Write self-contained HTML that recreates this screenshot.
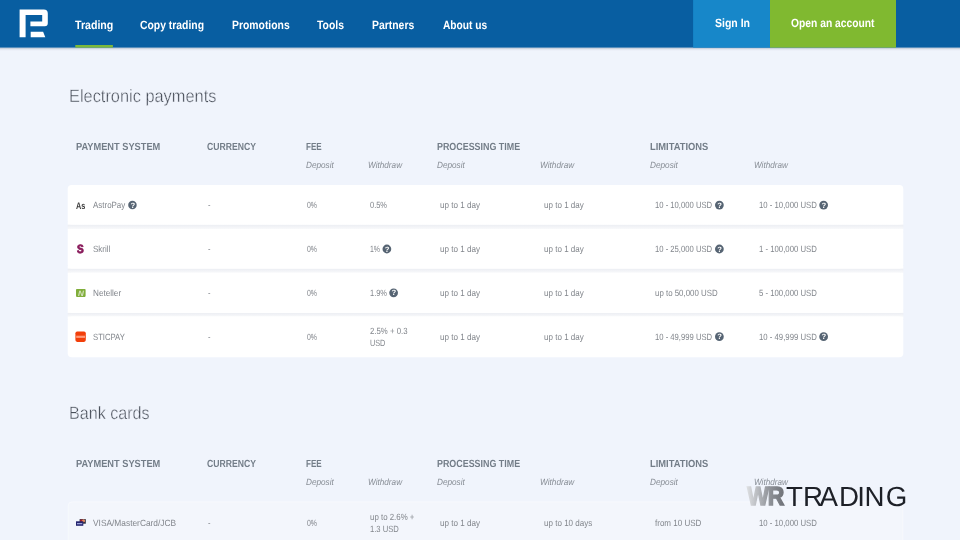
<!DOCTYPE html>
<html lang="en">
<head>
<meta charset="utf-8">
<title>Deposit and withdrawal</title>
<style>
*{margin:0;padding:0;box-sizing:border-box}
html,body{width:960px;height:540px;overflow:hidden}
body{position:relative;background:#f0f4fc;font-family:"Liberation Sans",sans-serif;text-rendering:geometricPrecision}
#pg{position:absolute;left:0;top:0;width:960px;height:540px;will-change:transform}
.t{position:absolute;white-space:nowrap;line-height:1;transform-origin:0 50%;display:block}
.nv{color:#fff;font-weight:bold}
.ttl{color:#474d58;-webkit-text-stroke:0.4px #f0f4fc}
.hd{color:#737d88;font-weight:bold}
.sub{color:#878d95;font-style:italic}
.d{color:#82868c}
.as{color:#3c3c3c;font-weight:bold}
.sk{color:#8a1c5c;font-weight:bold;-webkit-text-stroke:0.8px #8a1c5c}
.nt{color:#d6e2c0;font-weight:bold;font-style:italic}
.hq{color:#fff;font-weight:bold}
.ic{position:absolute;display:block}
</style>
</head>
<body>
<div id="pg">
<svg class="ic" style="left:0;top:0;width:960px;height:540px" viewBox="0 0 960 540">
<defs>
<linearGradient id="gg" x1="0" y1="0" x2="0" y2="1"><stop offset="0" stop-color="#fff"/><stop offset="0.26" stop-color="#fff"/><stop offset="0.3" stop-color="#eceef3"/><stop offset="0.7" stop-color="#f7f8fa"/><stop offset="0.74" stop-color="#fff"/><stop offset="1" stop-color="#fff"/></linearGradient>
<linearGradient id="ns" x1="0" y1="0" x2="0" y2="1"><stop offset="0" stop-color="#8f98aa" stop-opacity=".7"/><stop offset="0.45" stop-color="#aab2c2" stop-opacity=".25"/><stop offset="1" stop-color="#c0c8d8" stop-opacity="0"/></linearGradient>
</defs>
<rect x="0" y="47.6" width="960" height="3.4" fill="url(#ns)"/>
<rect x="0" y="0" width="960" height="47.6" fill="#085ea1"/>
<rect x="693.1" y="0" width="77" height="47.6" fill="#1787c9"/>
<rect x="770" y="0" width="126" height="47.6" fill="#80b930"/>
<rect x="75.3" y="45" width="37.6" height="2.6" fill="#7cb83a"/>
<path fill="#fff" d="M19.6 9.6 H43.8 A4 4 0 0 1 47.8 13.6 V23.2 A3 3 0 0 1 44.8 26.2 H30.4 V21.4 H42.2 V15.1 H25.6 V37.3 H19.6 Z"/>
<path fill="#fff" d="M30.7 31.8 H43.1 L45.3 37.3 H30.7 Z"/>
<rect x="67.7" y="221.90" width="835.6" height="9.55" fill="url(#gg)"/>
<rect x="67.7" y="265.95" width="835.6" height="9.30" fill="url(#gg)"/>
<rect x="67.7" y="310.15" width="835.6" height="8.90" fill="url(#gg)"/>
<rect x="67.7" y="185.1" width="835.6" height="39.3" rx="4" fill="#fff"/>
<rect x="67.7" y="228.95" width="835.6" height="39.5" rx="4" fill="#fff"/>
<rect x="67.7" y="272.75" width="835.6" height="39.9" rx="4" fill="#fff"/>
<rect x="67.7" y="316.55" width="835.6" height="40.6" rx="4" fill="#fff"/>
<rect x="68.2" y="501.9" width="834.6" height="46" rx="4" fill="#f3f6fc" stroke="#f7f9fd" stroke-width="1"/>
<rect x="76" y="289" width="9.6" height="7.9" rx="0.8" fill="#80ae3b"/>
<rect x="75.4" y="331.5" width="10.4" height="10.4" rx="1.8" fill="#f23f0a"/>
<rect x="76.2" y="335.7" width="8.8" height="2.2" fill="#ff9a7a"/>
<rect x="79.6" y="519.1" width="6.2" height="4.6" fill="#2c2c3c"/>
<circle cx="81.6" cy="520.7" r="1.5" fill="#b0202a"/>
<circle cx="83.6" cy="520.7" r="1.5" fill="#e08a60"/>
<rect x="76" y="521.3" width="7.3" height="4.5" fill="#24246e"/>
<rect x="77" y="523" width="5.3" height="1.3" fill="#9aa0d8"/>
<circle cx="132.45" cy="205.10" r="4.25" fill="#566473"/>
<circle cx="719.38" cy="205.10" r="4.38" fill="#566473"/>
<circle cx="823.62" cy="205.10" r="4.38" fill="#566473"/>
<circle cx="386.88" cy="249.00" r="4.38" fill="#566473"/>
<circle cx="719.38" cy="249.00" r="4.38" fill="#566473"/>
<circle cx="393.62" cy="292.80" r="4.38" fill="#566473"/>
<circle cx="719.38" cy="336.70" r="4.38" fill="#566473"/>
<circle cx="823.62" cy="336.70" r="4.38" fill="#566473"/>
</svg>

<span class="t nv" style="left:75.30px;top:18px;font-size:12.0px;line-height:14px;transform:scaleX(0.8836);">Trading</span>
<span class="t nv" style="left:140.30px;top:18px;font-size:12.0px;line-height:14px;transform:scaleX(0.8654);">Copy trading</span>
<span class="t nv" style="left:231.55px;top:18px;font-size:12.0px;line-height:14px;transform:scaleX(0.8657);">Promotions</span>
<span class="t nv" style="left:317.30px;top:18px;font-size:12.0px;line-height:14px;transform:scaleX(0.8669);">Tools</span>
<span class="t nv" style="left:372.30px;top:18px;font-size:12.0px;line-height:14px;transform:scaleX(0.8670);">Partners</span>
<span class="t nv" style="left:442.80px;top:18px;font-size:12.0px;line-height:14px;transform:scaleX(0.8506);">About us</span>
<span class="t nv" style="left:714.50px;top:16px;font-size:12.0px;line-height:14px;transform:scaleX(0.8748);">Sign In</span>
<span class="t nv" style="left:791.00px;top:16px;font-size:12.0px;line-height:14px;transform:scaleX(0.8577);">Open an account</span>
<span class="t ttl" style="left:68.99px;top:86px;font-size:17.9px;line-height:20px;transform:scaleX(0.9148);">Electronic payments</span>
<span class="t ttl" style="left:69.00px;top:403px;font-size:17.9px;line-height:20px;transform:scaleX(0.9000);">Bank cards</span>
<span class="t hd" style="left:75.50px;top:142px;font-size:10.3px;line-height:11px;transform:scaleX(0.8981);">PAYMENT SYSTEM</span>
<span class="t hd" style="left:206.75px;top:142px;font-size:10.3px;line-height:11px;transform:scaleX(0.8378);">CURRENCY</span>
<span class="t hd" style="left:305.50px;top:142px;font-size:10.3px;line-height:11px;transform:scaleX(0.7813);">FEE</span>
<span class="t hd" style="left:436.75px;top:142px;font-size:10.3px;line-height:11px;transform:scaleX(0.8650);">PROCESSING TIME</span>
<span class="t hd" style="left:650.00px;top:142px;font-size:10.3px;line-height:11px;transform:scaleX(0.9071);">LIMITATIONS</span>
<span class="t sub" style="left:305.50px;top:160px;font-size:9.0px;line-height:10px;transform:scaleX(0.9108);">Deposit</span>
<span class="t sub" style="left:368.00px;top:160px;font-size:9.0px;line-height:10px;transform:scaleX(0.9096);">Withdraw</span>
<span class="t sub" style="left:436.75px;top:160px;font-size:9.0px;line-height:10px;transform:scaleX(0.9108);">Deposit</span>
<span class="t sub" style="left:540.20px;top:160px;font-size:9.0px;line-height:10px;transform:scaleX(0.9149);">Withdraw</span>
<span class="t sub" style="left:650.00px;top:160px;font-size:9.0px;line-height:10px;transform:scaleX(0.9125);">Deposit</span>
<span class="t sub" style="left:753.75px;top:160px;font-size:9.0px;line-height:10px;transform:scaleX(0.9030);">Withdraw</span>
<span class="t hd" style="left:75.50px;top:459px;font-size:10.3px;line-height:11px;transform:scaleX(0.8981);">PAYMENT SYSTEM</span>
<span class="t hd" style="left:206.75px;top:459px;font-size:10.3px;line-height:11px;transform:scaleX(0.8378);">CURRENCY</span>
<span class="t hd" style="left:305.50px;top:459px;font-size:10.3px;line-height:11px;transform:scaleX(0.7813);">FEE</span>
<span class="t hd" style="left:436.75px;top:459px;font-size:10.3px;line-height:11px;transform:scaleX(0.8650);">PROCESSING TIME</span>
<span class="t hd" style="left:650.00px;top:459px;font-size:10.3px;line-height:11px;transform:scaleX(0.9071);">LIMITATIONS</span>
<span class="t sub" style="left:305.50px;top:477px;font-size:9.0px;line-height:10px;transform:scaleX(0.9108);">Deposit</span>
<span class="t sub" style="left:368.00px;top:477px;font-size:9.0px;line-height:10px;transform:scaleX(0.9096);">Withdraw</span>
<span class="t sub" style="left:436.75px;top:477px;font-size:9.0px;line-height:10px;transform:scaleX(0.9108);">Deposit</span>
<span class="t sub" style="left:540.20px;top:477px;font-size:9.0px;line-height:10px;transform:scaleX(0.9149);">Withdraw</span>
<span class="t sub" style="left:650.00px;top:477px;font-size:9.0px;line-height:10px;transform:scaleX(0.9125);">Deposit</span>
<span class="t sub" style="left:753.75px;top:477px;font-size:9.0px;line-height:10px;transform:scaleX(0.9030);">Withdraw</span>
<span class="t d" style="left:93.00px;top:200px;font-size:9.0px;line-height:10px;transform:scaleX(0.8834);">AstroPay</span>
<span class="t d" style="left:370.00px;top:200px;font-size:9.0px;line-height:10px;transform:scaleX(0.8288);">0.5%</span>
<span class="t d" style="left:655.00px;top:200px;font-size:9.0px;line-height:10px;transform:scaleX(0.8514);">10 - 10,000 USD</span>
<span class="t d" style="left:758.75px;top:200px;font-size:9.0px;line-height:10px;transform:scaleX(0.8625);">10 - 10,000 USD</span>
<span class="t d" style="left:93.00px;top:244px;font-size:9.0px;line-height:10px;transform:scaleX(0.8924);">Skrill</span>
<span class="t d" style="left:370.00px;top:244px;font-size:9.0px;line-height:10px;transform:scaleX(0.7689);">1%</span>
<span class="t d" style="left:655.00px;top:244px;font-size:9.0px;line-height:10px;transform:scaleX(0.8514);">10 - 25,000 USD</span>
<span class="t d" style="left:758.75px;top:244px;font-size:9.0px;line-height:10px;transform:scaleX(0.8625);">1 - 100,000 USD</span>
<span class="t d" style="left:93.00px;top:288px;font-size:9.0px;line-height:10px;transform:scaleX(0.9060);">Neteller</span>
<span class="t d" style="left:370.00px;top:288px;font-size:9.0px;line-height:10px;transform:scaleX(0.8288);">1.9%</span>
<span class="t d" style="left:654.50px;top:288px;font-size:9.0px;line-height:10px;transform:scaleX(0.8744);">up to 50,000 USD</span>
<span class="t d" style="left:758.75px;top:288px;font-size:9.0px;line-height:10px;transform:scaleX(0.8625);">5 - 100,000 USD</span>
<span class="t d" style="left:93.00px;top:332px;font-size:9.0px;line-height:10px;transform:scaleX(0.8555);">STICPAY</span>
<span class="t d" style="left:370.00px;top:326px;font-size:9.0px;line-height:10px;transform:scaleX(0.8665);">2.5% + 0.3</span>
<span class="t d" style="left:370.00px;top:338px;font-size:9.0px;line-height:10px;transform:scaleX(0.8076);">USD</span>
<span class="t d" style="left:655.00px;top:332px;font-size:9.0px;line-height:10px;transform:scaleX(0.8514);">10 - 49,999 USD</span>
<span class="t d" style="left:758.75px;top:332px;font-size:9.0px;line-height:10px;transform:scaleX(0.8625);">10 - 49,999 USD</span>
<span class="t d" style="left:207.90px;top:200px;font-size:9.0px;line-height:10px;transform:scaleX(0.8333);">-</span>
<span class="t d" style="left:307.00px;top:200px;font-size:9.0px;line-height:10px;transform:scaleX(0.7689);">0%</span>
<span class="t d" style="left:439.50px;top:200px;font-size:9.0px;line-height:10px;transform:scaleX(0.8993);">up to 1 day</span>
<span class="t d" style="left:543.75px;top:200px;font-size:9.0px;line-height:10px;transform:scaleX(0.8938);">up to 1 day</span>
<span class="t d" style="left:207.90px;top:244px;font-size:9.0px;line-height:10px;transform:scaleX(0.8333);">-</span>
<span class="t d" style="left:307.00px;top:244px;font-size:9.0px;line-height:10px;transform:scaleX(0.7689);">0%</span>
<span class="t d" style="left:439.50px;top:244px;font-size:9.0px;line-height:10px;transform:scaleX(0.8993);">up to 1 day</span>
<span class="t d" style="left:543.75px;top:244px;font-size:9.0px;line-height:10px;transform:scaleX(0.8938);">up to 1 day</span>
<span class="t d" style="left:207.90px;top:288px;font-size:9.0px;line-height:10px;transform:scaleX(0.8333);">-</span>
<span class="t d" style="left:307.00px;top:288px;font-size:9.0px;line-height:10px;transform:scaleX(0.7689);">0%</span>
<span class="t d" style="left:439.50px;top:288px;font-size:9.0px;line-height:10px;transform:scaleX(0.8993);">up to 1 day</span>
<span class="t d" style="left:543.75px;top:288px;font-size:9.0px;line-height:10px;transform:scaleX(0.8938);">up to 1 day</span>
<span class="t d" style="left:207.90px;top:332px;font-size:9.0px;line-height:10px;transform:scaleX(0.8333);">-</span>
<span class="t d" style="left:307.00px;top:332px;font-size:9.0px;line-height:10px;transform:scaleX(0.7689);">0%</span>
<span class="t d" style="left:439.50px;top:332px;font-size:9.0px;line-height:10px;transform:scaleX(0.8993);">up to 1 day</span>
<span class="t d" style="left:543.75px;top:332px;font-size:9.0px;line-height:10px;transform:scaleX(0.8938);">up to 1 day</span>
<span class="t d" style="left:93.40px;top:518px;font-size:9.0px;line-height:10px;transform:scaleX(0.9283);">VISA/MasterCard/JCB</span>
<span class="t d" style="left:207.90px;top:518px;font-size:9.0px;line-height:10px;transform:scaleX(0.8333);">-</span>
<span class="t d" style="left:307.00px;top:518px;font-size:9.0px;line-height:10px;transform:scaleX(0.7689);">0%</span>
<span class="t d" style="left:370.00px;top:512px;font-size:9.0px;line-height:10px;transform:scaleX(0.8757);">up to 2.6% +</span>
<span class="t d" style="left:370.00px;top:524px;font-size:9.0px;line-height:10px;transform:scaleX(0.8475);">1.3 USD</span>
<span class="t d" style="left:439.50px;top:518px;font-size:9.0px;line-height:10px;transform:scaleX(0.8993);">up to 1 day</span>
<span class="t d" style="left:543.75px;top:518px;font-size:9.0px;line-height:10px;transform:scaleX(0.8938);">up to 10 days</span>
<span class="t d" style="left:654.50px;top:518px;font-size:9.0px;line-height:10px;transform:scaleX(0.8902);">from 10 USD</span>
<span class="t d" style="left:758.75px;top:518px;font-size:9.0px;line-height:10px;transform:scaleX(0.8625);">10 - 10,000 USD</span>
<span class="t as" style="left:76.00px;top:201px;font-size:9.6px;line-height:11px;transform:scaleX(0.7629);">As</span>
<span class="t sk" style="left:77.40px;top:242px;font-size:12.0px;line-height:14px;transform:scaleX(0.8375);">S</span>
<span class="t nt" style="left:77.60px;top:289px;font-size:7.6px;line-height:9px;transform:scaleX(1.0667);">N</span>
<span class="t hq" style="left:130.40px;top:200.75px;font-size:7.6px;line-height:9px">?</span>
<span class="t hq" style="left:717.33px;top:200.75px;font-size:7.6px;line-height:9px">?</span>
<span class="t hq" style="left:821.58px;top:200.75px;font-size:7.6px;line-height:9px">?</span>
<span class="t hq" style="left:384.82px;top:244.65px;font-size:7.6px;line-height:9px">?</span>
<span class="t hq" style="left:717.33px;top:244.65px;font-size:7.6px;line-height:9px">?</span>
<span class="t hq" style="left:391.57px;top:288.45px;font-size:7.6px;line-height:9px">?</span>
<span class="t hq" style="left:717.33px;top:332.35px;font-size:7.6px;line-height:9px">?</span>
<span class="t hq" style="left:821.58px;top:332.35px;font-size:7.6px;line-height:9px">?</span>

<!-- watermark -->
<svg class="ic" style="left:740px;top:480px;width:180px;height:32px" viewBox="740 480 180 32">
<defs>
<linearGradient id="wg" gradientUnits="userSpaceOnUse" x1="0" y1="0" x2="42" y2="0"><stop offset="0" stop-color="#dcdee1"/><stop offset="0.58" stop-color="#92959b"/><stop offset="1" stop-color="#6f7278"/></linearGradient>
</defs>
<text transform="translate(747.2 505) scale(0.875 1)" x="0 23.6" y="0" font-family="Liberation Sans, sans-serif" font-weight="bold" font-size="26.2" fill="url(#wg)" stroke="url(#wg)" stroke-width="1.4">WR</text>
<text x="786.1 802.9 819.6 839 857.3 864.5 885.7" y="505.6" font-family="Liberation Sans, sans-serif" font-size="27.7" fill="#1d2027">TRADING</text>
</svg>
</div>
</body>
</html>
